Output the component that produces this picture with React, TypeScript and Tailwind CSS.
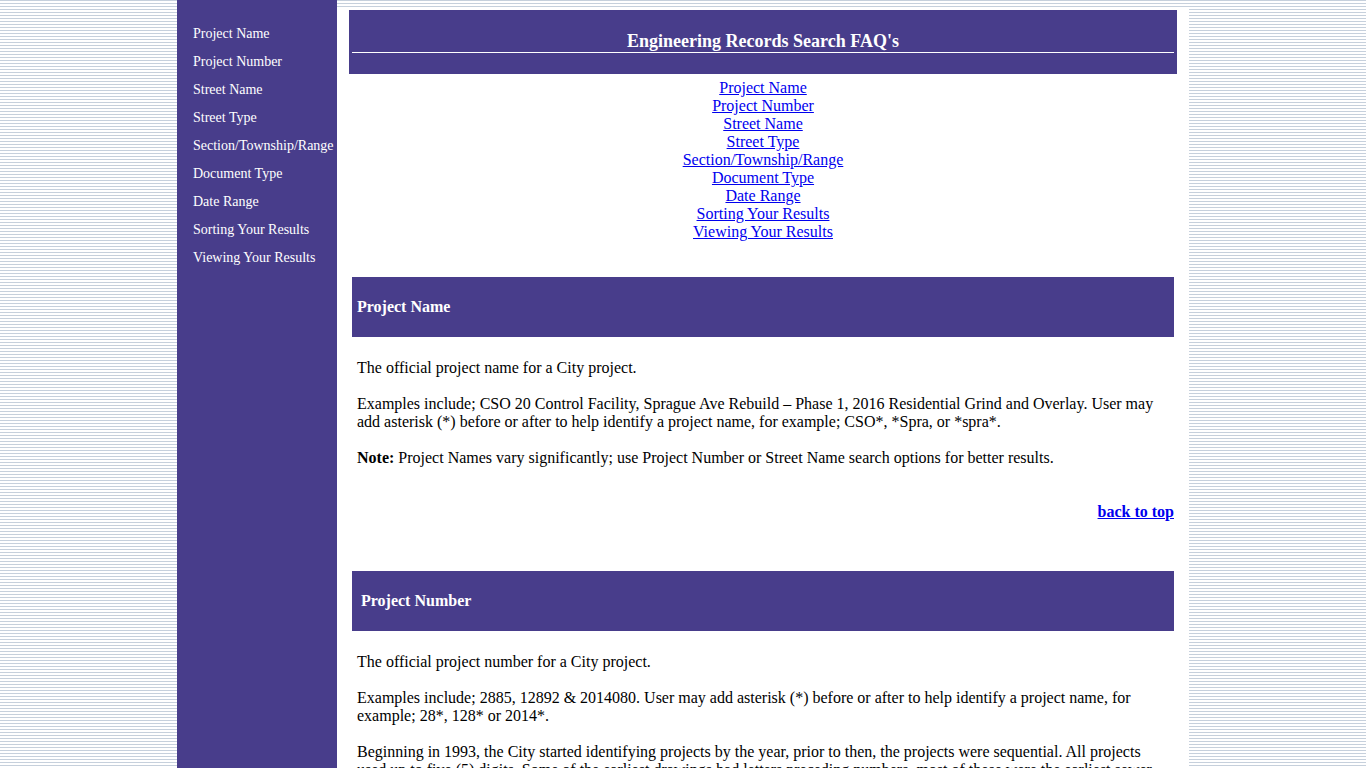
import React from 'react';

const navItems = [
  'Project Name',
  'Project Number',
  'Street Name',
  'Street Type',
  'Section/Township/Range',
  'Document Type',
  'Date Range',
  'Sorting Your Results',
  'Viewing Your Results',
];

// one FAQ block: purple bar, paragraphs, back-to-top link
const FaqSection: React.FC<{ title: string; indent?: string; children: React.ReactNode }> = ({ title, indent = 'pl-[5px]', children }) => (
  <div className="px-[3px]">
    <div className={`h-[60px] bg-[#483d8b] flex items-center ${indent}`}>
      <h3 className="text-white font-bold text-[16px] leading-[18px]">{title}</h3>
    </div>
    <div className="px-[5px] pt-[22px] text-[16px] leading-[18px] text-black space-y-[18px]">{children}</div>
    <div className="text-right mt-[36px] leading-[18px]">
      <a href="#top" className="text-[#0000ee] underline font-bold text-[16px] leading-[18px]">back to top</a>
    </div>
  </div>
);

const App: React.FC = () => {
  return (
    <div className="min-h-screen bg-[repeating-linear-gradient(to_bottom,#c6d0dc_0px,#c6d0dc_1px,#ffffff_1px,#ffffff_3px)] font-['Liberation_Serif','Times_New_Roman',serif]">
      <div className="w-[1012px] mx-auto flex min-h-screen">
        <nav className="w-[160px] shrink-0 bg-[#483d8b] pt-[20px] pl-[16px]">
          {navItems.map((item) => (
            <div key={item} className="text-white text-[14px] leading-[28px] whitespace-nowrap">{item}</div>
          ))}
        </nav>
        <main className="w-[852px] mt-[8px] bg-white px-[12px] pt-[2px] pb-10">
          <div className="h-[64px] bg-[#483d8b] px-[3px] pt-[20px]">
            <h2 className="text-white text-center font-bold text-[18px] leading-[22px]">Engineering Records Search FAQ's</h2>
            <div className="h-px bg-white"></div>
          </div>

          <div className="mt-[5px] flex flex-col items-center text-[16px] leading-[18px]">
            {navItems.map((item) => (
              <a key={item} href="#" className="text-[#0000ee] underline">{item}</a>
            ))}
          </div>

          <div className="mt-[36px]">
            <FaqSection title="Project Name">
              <p>The official project name for a City project.</p>
              <p>
                Examples include; CSO 20 Control Facility, Sprague Ave Rebuild – Phase 1, 2016 Residential Grind and Overlay. User may add asterisk (*) before or after to help identify a project name, for example; CSO*, *Spra, or *spra*.
              </p>
              <p>
                <b>Note:</b> Project Names vary significantly; use Project Number or Street Name search options for better results.
              </p>
            </FaqSection>
          </div>

          <div className="mt-[50px]">
            <FaqSection title="Project Number" indent="pl-[9px]">
              <p>The official project number for a City project.</p>
              <p>
                Examples include; 2885, 12892 &amp; 2014080. User may add asterisk (*) before or after to help identify a project name, for example; 28*, 128* or 2014*.
              </p>
              <p>
                Beginning in 1993, the City started identifying projects by the year, prior to then, the projects were sequential. All projects used up to five (5) digits. Some of the earliest drawings had letters preceding numbers, most of these were the earliest sewer projects.
              </p>
            </FaqSection>
          </div>
        </main>
      </div>
    </div>
  );
};

export default App;
